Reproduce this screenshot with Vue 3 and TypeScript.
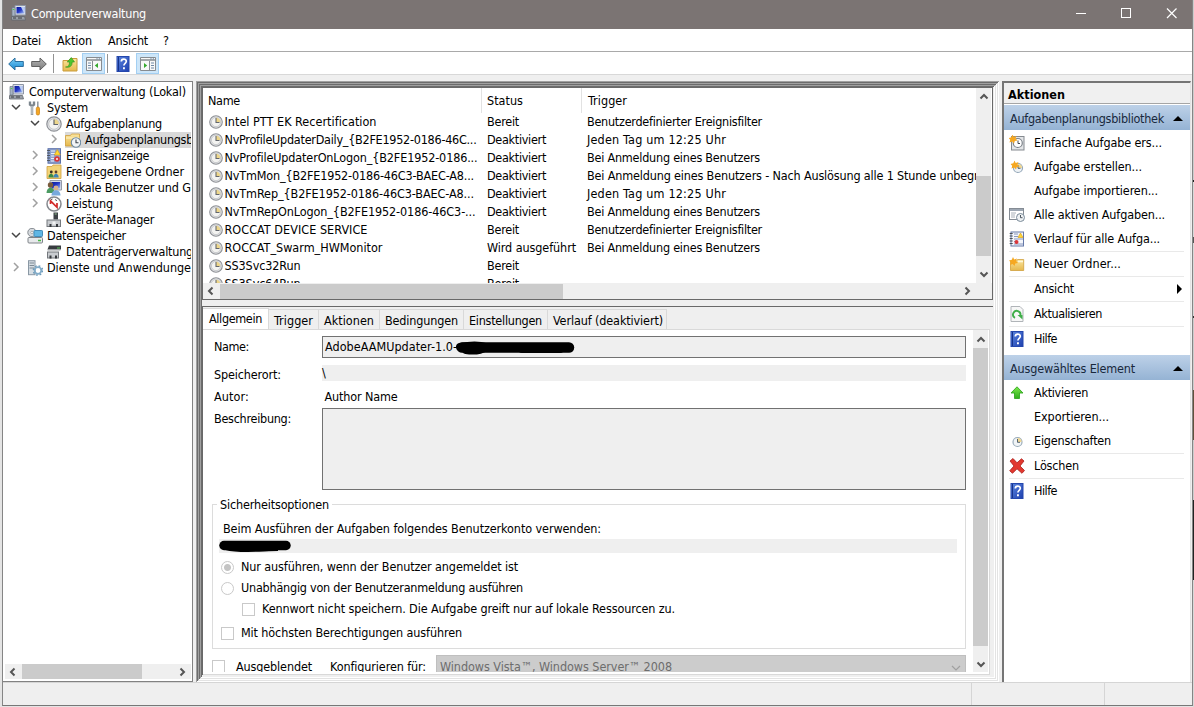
<script setup lang="ts">
import type { Directive } from 'vue'

// Spreads a label over a given advance width by adjusting its letter spacing.
const vFit: Directive<HTMLElement, number> = {
  mounted(el, { value }) {
    if (!value) return
    const count = (el.textContent ?? '').trim().length
    const range = document.createRange()
    range.selectNodeContents(el)
    const natural = range.getBoundingClientRect().width
    el.style.letterSpacing = `${(value - natural) / count}px`
  },
}

interface Node { label: string; w: number; icon: string; level: number; open?: boolean; leaf?: boolean; selected?: boolean }
const tree: Node[] = [
  { label: 'Computerverwaltung (Lokal)', w: 157, icon: 'computer', level: 0, leaf: true },
  { label: 'System', w: 41, icon: 'tools', level: 1, open: true },
  { label: 'Aufgabenplanung', w: 96, icon: 'clock', level: 2, open: true },
  { label: 'Aufgabenplanungsbibliothek', w: 154, icon: 'folderclock', level: 3, selected: true },
  { label: 'Ereignisanzeige', w: 83, icon: 'events', level: 2 },
  { label: 'Freigegebene Ordner', w: 118, icon: 'shared', level: 2 },
  { label: 'Lokale Benutzer und Gruppen', w: 164, icon: 'users', level: 2 },
  { label: 'Leistung', w: 47, icon: 'perf', level: 2 },
  { label: 'Geräte-Manager', w: 88, icon: 'device', level: 2, leaf: true },
  { label: 'Datenspeicher', w: 79, icon: 'storage', level: 1, open: true },
  { label: 'Datenträgerverwaltung', w: 127, icon: 'disk', level: 2, leaf: true },
  { label: 'Dienste und Anwendungen', w: 151, icon: 'services', level: 1 },
]

type Cell = [string, number]
const ready: Cell = ['Bereit', 32]
const off: Cell = ['Deaktiviert', 59]
const running: Cell = ['Wird ausgeführt', 89]
const custom: Cell = ['Benutzerdefinierter Ereignisfilter', 175]
const daily: Cell = ['Jeden Tag um 12:25 Uhr', 139]
const logon: Cell = ['Bei Anmeldung eines Benutzers', 173]
const hourly: Cell = ['Bei Anmeldung eines Benutzers - Nach Auslösung alle 1 Stunde unbegrenzt', 415]
const none: Cell = ['', 0]
const tasks: Cell[][] = [
  [['Intel PTT EK Recertification', 152], ready, custom],
  [['NvProfileUpdaterDaily_{B2FE1952-0186-46C...', 252], off, daily],
  [['NvProfileUpdaterOnLogon_{B2FE1952-0186...', 253], off, logon],
  [['NvTmMon_{B2FE1952-0186-46C3-BAEC-A8...', 249.5], off, hourly],
  [['NvTmRep_{B2FE1952-0186-46C3-BAEC-A8...', 249.5], off, daily],
  [['NvTmRepOnLogon_{B2FE1952-0186-46C3-...', 251], off, logon],
  [['ROCCAT DEVICE SERVICE', 143], ready, custom],
  [['ROCCAT_Swarm_HWMonitor', 158], running, logon],
  [['SS3Svc32Run', 76], ready, none],
  [['SS3Svc64Run', 76], ready, none],
]

const tabs = [
  { label: 'Allgemein', w: 53, width: 66 },
  { label: 'Trigger', w: 39, width: 50 },
  { label: 'Aktionen', w: 50, width: 61 },
  { label: 'Bedingungen', w: 73, width: 84 },
  { label: 'Einstellungen', w: 73, width: 84 },
  { label: 'Verlauf (deaktiviert)', w: 110, width: 119 },
]

interface Action { label: string; w: number; icon?: string; line?: boolean; sub?: boolean }
const groups: { title: string; w: number; items: Action[] }[] = [
  {
    title: 'Aufgabenplanungsbibliothek', w: 154, items: [
      { label: 'Einfache Aufgabe ers...', w: 128, icon: 'newbasic' },
      { label: 'Aufgabe erstellen...', w: 108, icon: 'newtask' },
      { label: 'Aufgabe importieren...', w: 124 },
      { label: 'Alle aktiven Aufgaben...', w: 131, icon: 'running' },
      { label: 'Verlauf für alle Aufga...', w: 126, icon: 'history', line: true },
      { label: 'Neuer Ordner...', w: 87, icon: 'newfolder', line: true },
      { label: 'Ansicht', w: 40, sub: true, line: true },
      { label: 'Aktualisieren', w: 68, icon: 'refresh', line: true },
      { label: 'Hilfe', w: 23, icon: 'help' },
    ],
  },
  {
    title: 'Ausgewähltes Element', w: 125, items: [
      { label: 'Aktivieren', w: 54, icon: 'up' },
      { label: 'Exportieren...', w: 75 },
      { label: 'Eigenschaften', w: 77, icon: 'smallclock', line: true },
      { label: 'Löschen', w: 45, icon: 'delete', line: true },
      { label: 'Hilfe', w: 23, icon: 'help' },
    ],
  },
]
</script>

<template>
  <svg class="defs" width="0" height="0">
    <defs>
      <linearGradient id="gBlue" x1="0" y1="0" x2="1" y2="1"><stop offset="0" stop-color="#0a1a9c" /><stop offset=".5" stop-color="#2438c8" /><stop offset="1" stop-color="#a9c4f4" /></linearGradient>
      <linearGradient id="gFolder" x1="0" y1="0" x2="0" y2="1"><stop offset="0" stop-color="#fbe6a0" /><stop offset="1" stop-color="#e6b84c" /></linearGradient>
      <linearGradient id="gHelp" x1="0" y1="0" x2="1" y2="1"><stop offset="0" stop-color="#5b86e0" /><stop offset="1" stop-color="#1d3fae" /></linearGradient>
      <linearGradient id="gArrow" x1="0" y1="0" x2="0" y2="1"><stop offset="0" stop-color="#7cd0f8" /><stop offset="1" stop-color="#1686d0" /></linearGradient>
      <linearGradient id="gGray" x1="0" y1="0" x2="0" y2="1"><stop offset="0" stop-color="#b4b4b4" /><stop offset="1" stop-color="#7c7c7c" /></linearGradient>
      <linearGradient id="gGreen" x1="0" y1="0" x2="0" y2="1"><stop offset="0" stop-color="#7be84a" /><stop offset="1" stop-color="#2fae1c" /></linearGradient>
      <symbol id="i-computer" viewBox="0 0 16 16">
        <path d="M4 .5h10.500v9.500H4z" fill="#dfe3ea" stroke="#8d95a5" /><path d="M5.500 2h7.800v6.500H5.500z" fill="url(#gBlue)" />
        <path d="M10 2h3.300v6.500z" fill="#b9cdf4" /><path d="M1 2.500h3V11H1z" fill="#a8b4c4" stroke="#6d7887" stroke-width=".7" /><path d="M1.700 4h1.600v1H1.700z" fill="#4fd04f" />
        <path d="M.5 11.500h13l1 3.500H.5z" fill="#9a9fa6" stroke="#62676f" stroke-width=".8" /><path d="M2 13h3M7 13h4" stroke="#3b3f45" />
      </symbol>
      <symbol id="i-tools" viewBox="0 0 16 16">
        <path d="M3 1.500v3.200l2 1.300 2-1.300V1.500M5 6v9" fill="none" stroke="#7b858d" stroke-width="2.400" /><path d="M5 6v8.500" stroke="#e3e8ec" stroke-width="1" />
        <path d="M10.800 1.500v6" stroke="#8b949c" stroke-width="1.500" /><rect x="9.300" y="7" width="3.200" height="8" rx="1.500" fill="#f5a623" stroke="#c67c10" stroke-width=".7" />
      </symbol>
      <symbol id="i-clock" viewBox="0 0 16 16">
        <circle cx="8" cy="8" r="7.200" fill="#e3e4e7" stroke="#8d9095" stroke-width="1.200" /><circle cx="8" cy="8" r="5.300" fill="#f3f3f1" stroke="#b3b6ba" stroke-width=".7" />
        <path d="M8 8V3a5 5 0 0 1 5 5z" fill="#ecd68c" /><path d="M8 3.500V8.500h4" fill="none" stroke="#62666c" stroke-width="1.200" />
      </symbol>
      <symbol id="i-folder" viewBox="0 0 16 16">
        <path d="M.5 3.500h5l1-1.500h8v12H.5z" fill="url(#gFolder)" stroke="#cfa03c" stroke-width=".8" /><path d="M1 6h13.500" stroke="#fff3c8" />
      </symbol>
      <symbol id="i-folderclock" viewBox="0 0 16 16">
        <use href="#i-folder" /><circle cx="11" cy="10.500" r="4.700" fill="#f2f4f6" stroke="#6c8aa3" stroke-width="1.100" /><path d="M11 7.500v3.300h2.500" fill="none" stroke="#3c4650" stroke-width="1.100" />
      </symbol>
      <symbol id="i-events" viewBox="0 0 16 16">
        <rect x="2" y=".7" width="12.500" height="14.500" fill="#8fa3cf" stroke="#5b71a8" /><path d="M5 3h4M5 5.500h4M5 8h3M5 10.500h3M5 13h3" stroke="#e9effb" />
        <path d="M1 2.500h3M1 5h3M1 7.500h3M1 10h3M1 12.500h3" stroke="#4b5056" stroke-width=".9" /><path d="M11.300 1.500l3 5.500h-6z" fill="#ffd735" stroke="#d69a14" stroke-width=".6" /><circle cx="11" cy="11" r="2.800" fill="#d9363a" /><path d="M10 10l2 2m0-2l-2 2" stroke="#fff" stroke-width=".7" />
      </symbol>
      <symbol id="i-shared" viewBox="0 0 16 16">
        <path d="M1 2.500h5l1-1.500h8v13.500H1z" fill="#f3d478" stroke="#cfa03c" stroke-width=".8" /><circle cx="5.300" cy="8" r="1.400" fill="#3a2d25" /><circle cx="10" cy="8" r="1.400" fill="#5f4027" />
        <path d="M2.500 13.500c0-5 5-5 5.200 0z" fill="#3c8a48" /><path d="M7.500 13.500c0-5 5-5 5.200 0z" fill="#3f83b6" />
      </symbol>
      <symbol id="i-users" viewBox="0 0 16 16">
        <path d="M4 .5h11.500V10H4z" fill="#d7dce5" stroke="#929aa9" /><path d="M5.500 2h8.700v6.500H5.500z" fill="url(#gBlue)" />
        <circle cx="4.500" cy="5" r="2.700" fill="#7a5b3c" /><circle cx="10" cy="8" r="2.400" fill="#d9b28b" /><path d="M.5 13c0-7 8-7 8 0z" fill="#4b9b62" /><path d="M5.500 15.500c0-7 9-7 9 0z" fill="#78a9dc" />
      </symbol>
      <symbol id="i-perf" viewBox="0 0 16 16">
        <circle cx="8" cy="8" r="7" fill="#fff" stroke="#85888d" stroke-width="1.500" /><path d="M4.500 8V4.800l6.500 6.500V7" fill="none" stroke="#d22b2b" stroke-width="1.700" /><path d="M5 3.800l1.500-.8M9 3.500l2 1.200" stroke="#333" stroke-width=".8" />
      </symbol>
      <symbol id="i-device" viewBox="0 0 16 16">
        <rect x="7.500" y=".5" width="4.500" height="7" fill="#3d4146" /><path d="M8.700 2h2" stroke="#93c58e" /><rect x="1" y="8" width="13.500" height="6.500" fill="#c9ccd0" stroke="#74787d" /><path d="M3.500 12v3h2v-3zM10 12v3h2v-3z" fill="#33363a" /><path d="M6.500 9.500h3v3h-3z" fill="#f1f2f3" />
      </symbol>
      <symbol id="i-storage" viewBox="0 0 16 16">
        <circle cx="5" cy="4.500" r="4.200" fill="#d6dade" stroke="#83898f" /><circle cx="5" cy="4.500" r="1.200" fill="#fff" stroke="#777" stroke-width=".5" /><rect x="7" y="2.500" width="8.500" height="6" rx=".7" fill="#5fb6e4" stroke="#438bb8" />
        <rect x="1" y="9.500" width="14.500" height="5.500" rx="1" fill="#e7e9eb" stroke="#7e8388" /><path d="M11 12.500h3" stroke="#46b946" stroke-width="1.500" />
      </symbol>
      <symbol id="i-disk" viewBox="0 0 16 16">
        <path d="M3 1.500h12v4H1.500z" fill="#383c40" /><path d="M11 4h3" stroke="#59c659" /><rect x="1.500" y="8" width="11" height="6" fill="#c9ccd0" stroke="#74787d" /><path d="M3.500 11.500v3h2v-3zM9 11.500v3h2v-3z" fill="#33363a" /><path d="M1.500 6h13" stroke="#9a9ea2" />
      </symbol>
      <symbol id="i-services" viewBox="0 0 16 16">
        <rect x="1.500" y=".7" width="6.500" height="14" fill="#d5dde3" stroke="#8a98a4" /><path d="M2.500 3h4.500M2.500 5.500h4.500M2.500 8h4.500" stroke="#7e8b96" /><circle cx="11" cy="10.500" r="3.300" fill="none" stroke="#82acc9" stroke-width="1.800" /><circle cx="11" cy="10.500" r="4.700" fill="none" stroke="#6d9ab9" stroke-width="1.300" stroke-dasharray="1.800 1.900" />
      </symbol>
      <symbol id="i-help" viewBox="0 0 16 16">
        <rect x="2" y=".5" width="12" height="15" fill="url(#gHelp)" stroke="#2447ad" /><path d="M3.500 1v14" stroke="#16338a" />
        <path d="M6.300 5.500c0-3.300 5-3.200 5-.2 0 2-2.400 2-2.400 4.200" fill="none" stroke="#fff" stroke-width="1.700" /><path d="M8 11.300h1.900v1.900H8z" fill="#fff" />
      </symbol>
      <symbol id="i-back" viewBox="0 0 16 14"><path d="M.7 7L7 1v3.500h8.300v5H7V13z" fill="url(#gArrow)" stroke="#2b6f9f" /></symbol>
      <symbol id="i-fwd" viewBox="0 0 16 14"><path d="M15.300 7L9 1v3.500H.7v5H9V13z" fill="url(#gGray)" stroke="#606060" /></symbol>
      <symbol id="i-upfolder" viewBox="0 0 16 16">
        <path d="M1 4.500h6l1.500-2H15V15H1z" fill="url(#gFolder)" stroke="#c99c3d" /><path d="M3.500 11c3 0 4-2 4-5H5.200L9.300 1.500l3.200 4.500h-2.300c0 4-2.200 6-6.700 5z" fill="#4fc62e" stroke="#2f8f1b" stroke-width=".6" />
      </symbol>
      <symbol id="i-pane" viewBox="0 0 16 14">
        <path d="M.5.5h15v13H.5z" fill="#f8f8f8" stroke="#878c91" /><path d="M1 3h14" stroke="#878c91" stroke-width="1.500" /><path d="M10.500 1.800h1M12.800 1.800h1" stroke="#4b6f95" /><path d="M6.500 4v9" stroke="#878c91" /><path d="M2 6h3M2 8.500h3M2 11h3" stroke="#708aa6" /><path d="M12 6v5L8.800 8.500z" fill="#35a92c" />
      </symbol>
      <symbol id="i-pane2" viewBox="0 0 16 14">
        <path d="M.5.5h15v13H.5z" fill="#f8f8f8" stroke="#878c91" /><path d="M1 3h14" stroke="#878c91" stroke-width="1.500" /><path d="M10.500 1.800h1M12.800 1.800h1" stroke="#4b6f95" /><path d="M9.500 4v9" stroke="#878c91" /><path d="M11 6h3M11 8.500h3M11 11h3" stroke="#708aa6" /><path d="M4 6v5l3.200-2.500z" fill="#35a92c" />
      </symbol>
      <symbol id="i-star" viewBox="0 0 16 16"><path d="M4 0l1.200 2.500L8 1.500 7 4l2 2-2.700.5L5.500 9 3.700 7 1 8l.7-2.800L0 3.500l2.800-.7z" fill="#f6a821" /></symbol>
      <symbol id="i-newbasic" viewBox="0 0 16 16">
        <rect x="2.500" y="1.500" width="12.500" height="13.500" fill="#e4e6e8" stroke="#858a90" /><circle cx="8.800" cy="8" r="4.500" fill="#fff" stroke="#7c8289" stroke-width="1.200" /><path d="M9 5.500v3h2" fill="none" stroke="#444a50" /><use href="#i-star" x="-.5" y="-.5" />
      </symbol>
      <symbol id="i-newtask" viewBox="0 0 16 16">
        <circle cx="9" cy="9" r="4.500" fill="#eef2f5" stroke="#96a9ba" stroke-width="1.200" /><path d="M9 9V5a4 4 0 0 1 4 4z" fill="#f1d892" /><path d="M9 6v3.300h2.500" fill="none" stroke="#52606e" /><use href="#i-star" x="1.500" y="1.500" />
      </symbol>
      <symbol id="i-running" viewBox="0 0 16 16">
        <rect x=".5" y="1.500" width="14" height="11" fill="#fff" stroke="#858c94" /><path d="M1 3h13" stroke="#9da7b3" stroke-width="2" /><path d="M2 6h5M2 8h4M2 10h4" stroke="#a9b0b8" /><circle cx="11.500" cy="10.500" r="4" fill="#eef1f3" stroke="#7a8b99" /><path d="M11.500 8v2.700h2" fill="none" stroke="#4c5660" />
      </symbol>
      <symbol id="i-history" viewBox="0 0 16 16">
        <rect x="2" y="1" width="12.500" height="14" fill="#f4f6fb" stroke="#6579a8" /><path d="M5 3h4M5 5.500h4M5 8h9M5 10.500h3M5 13h9" stroke="#6d82b1" stroke-width=".8" /><path d="M.7 2.500h3M.7 5h3M.7 7.500h3M.7 10h3M.7 12.500h3" stroke="#4b5056" /><path d="M11.500 2l2.500 4.500H9z" fill="#ffd735" stroke="#d69a14" stroke-width=".6" /><circle cx="7.500" cy="11" r="2" fill="#d9363a" />
      </symbol>
      <symbol id="i-newfolder" viewBox="0 0 16 16"><path d="M1.500 5h6l1-1.500h6.200V14.500H1.500z" fill="url(#gFolder)" stroke="#cfa03c" stroke-width=".8" /><path d="M9 5.500h5" stroke="#fff8dc" stroke-width="1.500" /><use href="#i-star" y="1" /></symbol>
      <symbol id="i-refresh" viewBox="0 0 16 16"><path d="M2 .5h9l3 3v12H2z" fill="#f7f7f7" stroke="#b0b4b8" /><path d="M6 11.800A3.700 3.700 0 1 1 11.300 9.500" fill="none" stroke="#3fae49" stroke-width="1.900" /><path d="M8.500 9h5v4.500z" fill="#3fae49" /></symbol>
      <symbol id="i-up" viewBox="0 0 16 16"><path d="M8 1.800l6 6.200h-3.500v5.500h-5V8H2z" fill="url(#gGreen)" stroke="#34a822" stroke-width=".9" /></symbol>
      <symbol id="i-smallclock" viewBox="0 0 16 16"><circle cx="8.500" cy="9" r="4.500" fill="#f1f4f6" stroke="#9aacbb" stroke-width="1.200" /><path d="M8.500 9V5a4 4 0 0 1 4 4z" fill="#f1d892" /><path d="M8.500 6v3.300H11" fill="none" stroke="#52606e" /></symbol>
      <symbol id="i-delete" viewBox="0 0 16 16"><path d="M1 3l3-2.500 4 4.300L12.500.8 15 3l-4 5 4.500 4.500L13 15.300l-5-4.500-4.500 4.500L.7 12.800 5 8z" fill="#e2382f" stroke="#a91e1a" stroke-width=".8" /></symbol>
    </defs>
  </svg>

  <div class="screen">
    <div class="window">
      <header class="title">
        <svg class="ico"><use href="#i-computer" /></svg>
        <span v-fit="115" class="caption">Computerverwaltung</span>
        <svg class="controls" viewBox="0 0 120 30"><path d="M10 13.500h10M101 8.500l9.500 9.500m0-9.500L101 18" fill="none" stroke="#fff" stroke-width="1.200" /><rect x="55.500" y="8.500" width="9" height="9" fill="none" stroke="#fff" /></svg>
      </header>
      <nav class="menu">
        <span v-fit="29">Datei</span><span v-fit="35">Aktion</span><span v-fit="40">Ansicht</span><span>?</span>
      </nav>
      <div class="toolbar">
        <svg class="arrow"><use href="#i-back" /></svg>
        <svg class="arrow second"><use href="#i-fwd" /></svg>
        <i class="sep"></i>
        <svg class="ico folder"><use href="#i-upfolder" /></svg>
        <span class="pressed"><svg class="arrow"><use href="#i-pane" /></svg></span>
        <i class="sep close"></i>
        <svg class="ico help"><use href="#i-help" /></svg>
        <span class="pressed last"><svg class="arrow"><use href="#i-pane2" /></svg></span>
      </div>

      <main class="panes">
        <aside class="tree">
          <div class="nodes">
            <div v-for="n in tree" :key="n.label" class="node" :class="'l' + n.level">
              <span v-if="n.level" class="exp">
                <svg v-if="!n.leaf" viewBox="0 0 10 10">
                  <path v-if="n.open" d="M1 3l4 4 4-4" stroke="#444" /><path v-else d="M3 1l4 4-4 4" stroke="#a0a0a0" />
                </svg>
              </span>
              <div class="item" :class="{ selected: n.selected }">
                <svg class="ico"><use :href="'#i-' + n.icon" /></svg><span v-fit="n.w">{{ n.label }}</span>
              </div>
            </div>
          </div>
          <div class="hbar treebar">
            <svg viewBox="0 0 10 10"><path d="M6.500 1.500L3 5l3.500 3.500" /></svg><i class="thumb"></i><svg class="end" viewBox="0 0 10 10"><path d="M3.500 1.500L7 5 3.500 8.500" /></svg>
          </div>
        </aside>

        <section class="middle">
          <div class="list">
            <div class="rows">
              <div class="head"><span v-fit="32">Name</span><span v-fit="36">Status</span><span v-fit="39">Trigger</span></div>
              <div v-for="(t, i) in tasks" :key="i" class="row">
                <div class="cell"><svg class="ico"><use href="#i-clock" /></svg><span v-fit="t[0][1]">{{ t[0][0] }}</span></div>
                <div class="cell"><span v-fit="t[1][1]">{{ t[1][0] }}</span></div>
                <div class="cell"><span v-fit="t[2][1]">{{ t[2][0] }}</span></div>
              </div>
            </div>
            <div class="vbar">
              <svg viewBox="0 0 10 10"><path d="M1.500 6.500L5 3l3.500 3.500" /></svg><i class="thumb"></i><svg class="end" viewBox="0 0 10 10"><path d="M1.500 3.500L5 7l3.500-3.500" /></svg>
            </div>
            <div class="hbar listbar">
              <svg viewBox="0 0 10 10"><path d="M6.500 1.500L3 5l3.500 3.500" /></svg><i class="thumb"></i><svg class="end" viewBox="0 0 10 10"><path d="M3.500 1.500L7 5 3.500 8.500" /></svg>
            </div>
          </div>

          <div class="details">
            <div class="tabs">
              <div v-for="(t, i) in tabs" :key="t.label" class="tab" :class="{ active: i === 0 }" :style="{ width: t.width + 'px' }">
                <span v-fit="t.w">{{ t.label }}</span>
              </div>
            </div>
            <div class="page">
              <div class="form">
                <div class="field name"><label v-fit="35">Name:</label><div class="box">
                  <span v-fit="132">AdobeAAMUpdater-1.0-</span>
                  <svg class="ink" viewBox="0 0 120 14"><path d="M6 6.500H113" stroke="#000" stroke-width="10.500" stroke-linecap="round" /><path d="M4 6q16-3 26 0-8 5-20 3M66 8h38" fill="none" stroke="#000" stroke-width="8" stroke-linecap="round" /></svg>
                </div></div>
                <div class="field place"><label v-fit="67">Speicherort:</label><div class="box">\</div></div>
                <div class="field author"><label v-fit="35">Autor:</label><span v-fit="73">Author Name</span></div>
                <div class="field desc"><label v-fit="77">Beschreibung:</label><div class="box"></div></div>
                <div class="group">
                  <div class="legend"><span v-fit="109">Sicherheitsoptionen</span></div>
                  <div class="hint"><span v-fit="378">Beim Ausführen der Aufgaben folgendes Benutzerkonto verwenden:</span></div>
                  <div class="account"><svg viewBox="0 0 76 14"><path d="M6 6.500h62" stroke="#000" stroke-width="9.500" stroke-linecap="round" /><path d="M8 9c14 4 38 1 52 1" fill="none" stroke="#000" stroke-width="4" /></svg></div>
                  <div class="opt r1"><i class="radio on"></i><span v-fit="277">Nur ausführen, wenn der Benutzer angemeldet ist</span></div>
                  <div class="opt r2"><i class="radio"></i><span v-fit="282">Unabhängig von der Benutzeranmeldung ausführen</span></div>
                  <div class="opt r3"><i class="check"></i><span v-fit="413">Kennwort nicht speichern. Die Aufgabe greift nur auf lokale Ressourcen zu.</span></div>
                  <div class="opt r4"><i class="check"></i><span v-fit="221">Mit höchsten Berechtigungen ausführen</span></div>
                </div>
                <div class="foot">
                  <i class="check"></i><span v-fit="76" class="hid">Ausgeblendet</span><span v-fit="96" class="conf">Konfigurieren für:</span>
                  <div class="combo"><span v-fit="232">Windows Vista™, Windows Server™ 2008</span><svg viewBox="0 0 10 10"><path d="M1 3l4 4 4-4" fill="none" stroke="#a0a0a0" stroke-width="1.200" /></svg></div>
                </div>
              </div>
              <div class="vbar pagebar">
                <svg viewBox="0 0 10 10"><path d="M1.500 6.500L5 3l3.500 3.500" /></svg><i class="thumb"></i><svg class="end" viewBox="0 0 10 10"><path d="M1.500 3.500L5 7l3.500-3.500" /></svg>
              </div>
            </div>
          </div>
        </section>

        <aside class="actions">
          <h2><span v-fit="57">Aktionen</span></h2>
          <div v-for="g in groups" :key="g.title" class="agroup">
            <div class="ahead"><span v-fit="g.w">{{ g.title }}</span><i class="tri"></i></div>
            <div v-for="a in g.items" :key="a.label" class="action" :class="{ line: a.line }">
              <svg class="ico"><use v-if="a.icon" :href="'#i-' + a.icon" /></svg><span v-fit="a.w">{{ a.label }}</span><i v-if="a.sub" class="sub"></i>
            </div>
          </div>
        </aside>
      </main>
      <footer class="status"><i class="s1"></i><i class="s2"></i></footer>
    </div>
    <div class="edge"></div>
  </div>
</template>

<style>
body { background: #e6e6e6; overflow: hidden; }
</style>

<style scoped>
* { box-sizing: border-box; }
.defs { display: block; width: 0; height: 0; }
.screen { display: flex; width: 1194px; height: 707px; background: #e4e4e4; overflow: hidden; color: #000; font: 12.5px/16px "DejaVu Sans Condensed", "DejaVu Sans", sans-serif; font-stretch: condensed; white-space: nowrap; }
.window { display: flex; flex-direction: column; width: 1191px; height: 706px; margin-left: 2px; border-left: 1px solid #858585; border-right: 1px solid #858585; border-bottom: 1px solid #777; background: #efefef; }
.edge { width: 1px; background: linear-gradient(#ccc 0 180px, #222 180px 182px, #d8d8d8 182px 237px, #555 237px 243px, #d8d8d8 243px 316px, #333 316px 318px, #ccc 318px 390px, #60513c 390px 440px, #ccc 440px 500px, #222 500px 580px, #d8d8d8 580px); }
.ico { flex: none; display: block; width: 16px; height: 16px; }
.title { flex: none; display: flex; align-items: center; height: 29px; padding: 0 1px 1px 8px; background: #7b7473; color: #fff; }
.title .ico { margin-top: -2px; }
.caption { margin-left: 4px; }
.controls { width: 120px; height: 30px; margin: 1px 6px 0 auto; }
.title .controls { margin-right: 5px; }
.menu { flex: none; display: flex; align-items: center; gap: 16px; height: 23px; padding: 2px 0 0 9px; background: #fff; border-bottom: 1px solid #a9a9a9; }
.menu span:last-child { margin-left: -1px; }
.toolbar { flex: none; display: flex; align-items: center; height: 23px; padding: 1px 0 0 5px; background: #fff; border-bottom: 1px solid #d8d8d8; }
.arrow { width: 16px; height: 14px; }
.second { margin-left: 7px; }
.sep { width: 1px; height: 19px; margin-left: 6px; background: #929292; }
.sep.close { margin-left: 2px; }
.folder { margin-left: 8px; }
.help { margin-left: 7px; }
.pressed { display: flex; align-items: center; justify-content: center; width: 23px; height: 21px; margin-left: 4px; background: #cde6f9; border: 1px solid #a3cff2; }
.pressed.last { margin-left: 5px; }
.panes { flex: none; display: flex; height: 601px; margin-top: 6px; }
.tree { flex: none; display: flex; flex-direction: column; justify-content: space-between; width: 190px; border: 1px solid #828282; border-left: 0; background: #fff; padding: 1px 1px 2px; }
.nodes { overflow: hidden; padding-top: 1px; }
.node { display: flex; height: 16px; }
.l0 { padding-left: 5px; }
.l1 { padding-left: 5px; }
.l2 { padding-left: 24px; }
.l3 { padding-left: 43px; }
.exp { flex: none; display: flex; width: 18px; padding: 2px 0 0 2px; }
.exp svg { width: 10px; height: 10px; }
.exp path { fill: none; stroke-width: 1.500; }
.item { display: flex; gap: 4px; flex: 1; min-width: 0; }
.l0 .item { margin-left: 0; gap: 4px; }
.item.selected { background: #d9d9d9; }
.hbar { display: flex; align-items: center; height: 15px; background: #efefef; }
.hbar svg, .vbar svg { flex: none; width: 10px; height: 10px; }
.hbar path, .vbar path { fill: none; stroke: #555; stroke-width: 2; }
.hbar svg { margin: 0 4px 0 3px; }
.hbar .thumb { height: 15px; background: #cbcbcb; }
.hbar .end { margin-left: auto; }
.treebar { margin-left: 1px; }
.treebar .thumb { width: 120px; }
.vbar { display: flex; flex-direction: column; align-items: center; width: 15px; background: #efefef; }
.vbar svg { margin: 4px 0 3px; }
.vbar .thumb { width: 15px; background: #cbcbcb; }
.vbar .end { margin: auto 0 4px; }
.middle { flex: none; display: flex; flex-direction: column; gap: 6px; width: 803px; margin-left: 3px; padding: 6px 6px 7px; background: #efefef; box-shadow: inset 1px 1px #a0a0a0, inset -1px -1px #fff, inset 2px 2px #6c6c6c, inset -2px -2px #e3e3e3, inset 3px 3px #a0a0a0, inset -3px -3px #fff, inset 4px 4px #6c6c6c, inset -4px -4px #e3e3e3, inset 5px 5px #a0a0a0, inset -5px -5px #fff, inset 6px 6px #6c6c6c; }
.list { flex: none; display: grid; grid-template: 195px 16px / 1fr 16px; height: 213px; background: #fff; border: 1px solid #696969; }
.rows { overflow: hidden; }
.head { display: grid; grid-template-columns: 279px 100px 1fr; height: 24px; margin-bottom: 1px; align-items: stretch; line-height: 25px; }
.head span { padding-left: 5px; border-right: 1px solid #e2e2e2; }
.head span:last-child { border: 0; padding-left: 6px; }
.row { display: grid; grid-template-columns: 279px 100px 1fr; height: 18px; line-height: 18px; }
.cell { display: flex; align-items: center; padding-left: 5px; }
.cell .ico { width: 14px; height: 14px; margin: 0 1.500px 0 1px; }
.list .vbar { height: 195px; }
.list .vbar .thumb { height: 80px; margin-top: 71px; }
.listbar { grid-column: span 2; height: 16px; }
.listbar svg { margin-right: 4px; }
.listbar .thumb { width: 343px; }
.listbar .end { margin-right: 20px; }
.details { flex: 1; min-height: 0; display: flex; flex-direction: column; border-top: 1px solid #696969; border-left: 1px solid #696969; padding-right: 3px; background: #efefef; }
.tabs { flex: none; display: flex; align-items: flex-end; height: 22px; }
.tab { height: 20px; border: 1px solid #d9d9d9; border-left: 0; border-bottom: 0; padding: 1px 0 0 5px; line-height: 19px; }
.tab.active { height: 21px; background: #fff; padding-left: 6px; line-height: 17px; }
.page { flex: 1; min-height: 0; display: flex; justify-content: space-between; border: 1px solid #d9d9d9; border-left: 0; background: #fff; padding: 0 1px 2px 0; }
.form { width: 763px; padding: 6px 0 0 9px; overflow: hidden; }
.pagebar { padding-top: 1px; }
.pagebar .thumb { height: 298px; }
.pagebar svg { margin-bottom: 3px; }
.pagebar .end { margin-bottom: 3px; }
.field { display: flex; padding-left: 2px; }
.field label { width: 108px; }
.field .box { display: flex; width: 644px; background: #efefef; padding-left: 3px; }
.name { height: 22px; line-height: 22px; }
.name .box, .desc .box { border: 1px solid #717171; padding-left: 2px; line-height: 20px; }
.ink { width: 120px; height: 14px; margin: 4px 0 0 -1px; }
.place { height: 16px; margin-top: 7px; line-height: 19px; }
.place .box { padding-left: 0; line-height: 16px; }
.author { height: 16px; margin-top: 8px; }
.author span { padding-left: 2.500px; }
.desc { height: 82px; margin-top: 3px; line-height: 22px; }
.group { height: 145px; margin-top: 14px; border: 1px solid #dcdcdc; }
.form .group { width: 754px; }
.legend { display: flex; height: 16px; margin: -8px 0 0 4px; }
.legend span { background: #fff; padding: 0 3px; }
.hint { height: 16px; margin: 8px 0 0 10px; }
.account { height: 14px; width: 738px; margin: 2px 0 0 6px; background: #efefef; }
.account svg { display: block; width: 76px; height: 14px; margin-left: -1px; }
.opt { display: flex; align-items: center; height: 16px; margin-left: 8px; gap: 7px; }
.r1 { margin-top: 6px; }
.r2 { margin-top: 5px; }
.r3 { margin-top: 5px; margin-left: 29px; }
.r4 { margin-top: 8px; }
.radio, .check { flex: none; width: 13px; height: 13px; border: 1px solid #c9c9c9; background: #fff; }
.opt .radio, .opt .check { margin-top: 1px; }
.radio { border-radius: 50%; }
.radio.on { background: radial-gradient(circle, #c4c4c4 0 3px, #fff 4px); }
.foot { display: flex; height: 24px; margin-top: 6px; line-height: 23px; }
.foot .check { margin-top: 5px; }
.hid { width: 94px; margin-left: 11px; }
.conf { width: 106px; }
.combo { display: flex; justify-content: space-between; width: 530px; background: #ccc; border: 1px solid #bfbfbf; color: #6d6d6d; padding: 0 4px 0 3px; line-height: 21px; }
.combo svg { width: 10px; height: 10px; margin-top: 7px; }
.actions { flex: none; width: 189px; margin-left: 3px; border-left: 2px solid #757575; border-top: 2px solid #757575; border-right: 1px solid #e3e3e3; background: #fff; }
.actions h2 { height: 21px; margin: 0 0 1px; padding-left: 4px; background: #f0f0f0; border-bottom: 1px solid #a5a5a5; font-size: 12.500px; line-height: 23px; font-weight: bold; }
.ahead { display: flex; justify-content: space-between; align-items: center; height: 25px; padding: 2px 7px 0 6px; background: linear-gradient(#bdd1e8, #95b3d4); color: #18283c; margin-bottom: 1px; }
.agroup + .agroup { margin-top: 4px; }
.tri { border: 5px solid transparent; border-top: 0; border-bottom-color: #000; }
.action { display: flex; align-items: center; height: 24px; padding: 0 8px 0 5px; gap: 9px; }
.action.line { height: 25px; padding-bottom: 1px; background: linear-gradient(#e9e9e9, #e9e9e9) 5px 100% / 175px 1px no-repeat; }
.sub { margin-left: auto; border: 5px solid transparent; border-right: 0; border-left-color: #000; }
.status { flex: 1; display: flex; border-top: 1px solid #d5d5d5; }
.status i { width: 1px; background: #d5d5d5; }
.s1 { margin-left: 968px; }
.s2 { margin-left: 132px; }
</style>
